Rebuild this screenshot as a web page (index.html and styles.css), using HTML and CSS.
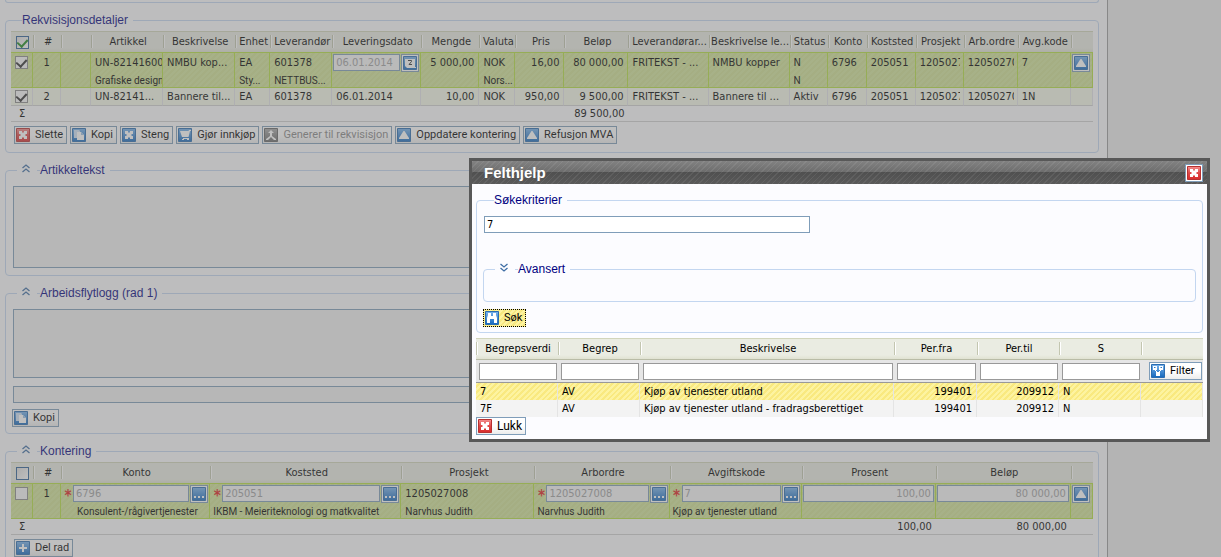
FILE: index.html
```
<!DOCTYPE html>
<html lang="no">
<head>
<meta charset="utf-8">
<title>Rekvisisjon</title>
<link rel="stylesheet" href="styles.css">
</head>
<body>
<svg class="defs" aria-hidden="true">
  <defs>
    <linearGradient id="gBlue" x1="0" y1="0" x2="0" y2="1"><stop offset="0" stop-color="#7ab4ec"/><stop offset="1" stop-color="#1467bd"/></linearGradient>
    <linearGradient id="gRed" x1="0" y1="0" x2="0" y2="1"><stop offset="0" stop-color="#f49090"/><stop offset=".5" stop-color="#e04848"/><stop offset="1" stop-color="#d82c2c"/></linearGradient>
    <linearGradient id="gGrey" x1="0" y1="0" x2="0" y2="1"><stop offset="0" stop-color="#aaa"/><stop offset="1" stop-color="#6a6a6a"/></linearGradient>
    <symbol id="blue" viewBox="0 0 14 14"><path fill="url(#gBlue)" stroke="#2a6cb0" d="M.5.5h13v13H.5z"/></symbol>
    <symbol id="delete" viewBox="0 0 14 14"><path fill="url(#gRed)" stroke="#b83030" d="M.5.5h13v13H.5z"/><path fill="#fff" d="M3 3h3v1l1 1 1-1V3h3v3h-1L9 7l1 1h1v3H8v-1L7 9l-1 1v1H3V8h1l1-1-1-1H3z"/></symbol>
    <symbol id="copy" viewBox="0 0 14 14"><use href="#blue"/><path fill="#cfe2f6" d="M2 2h5l1 1v7H2z"/><path fill="#fff" d="M5 4h4l3 3v5H5z"/><path fill="#9dc1e6" d="M9 4l3 3H9z"/></symbol>
    <symbol id="close" viewBox="0 0 14 14"><use href="#blue"/><path fill="#fff" d="M3 3h3v1l1 1 1-1V3h3v3h-1L9 7l1 1h1v3H8v-1L7 9l-1 1v1H3V8h1l1-1-1-1H3z"/></symbol>
    <symbol id="cart" viewBox="0 0 14 14"><use href="#blue"/><path fill="#fff" d="M2 3h8.500l.5-1h2v1h-1l-1.500 6H4zM5 10h6v1H5z"/><path fill="#fff" d="M4 11h2v1H4zM9 11h2v1H9z"/></symbol>
    <symbol id="gen" viewBox="0 0 14 14"><path fill="url(#gGrey)" stroke="#666" d="M.5.5h13v13H.5z"/><path fill="#fff" d="M7 2l3 3H8v3l4 3v1h-2L7 9l-3 3H2v-1l4-3V5H4z"/></symbol>
    <symbol id="up" viewBox="0 0 14 14"><use href="#blue"/><path fill="#fff" d="M6.500 3h1L12 10v1H2v-1z"/></symbol>
    <symbol id="dots" viewBox="0 0 14 14"><use href="#blue"/><path fill="#fff" d="M2 9h2v2H2zM6 9h2v2H6zM10 9h2v2h-2z"/></symbol>
    <symbol id="cal" viewBox="0 0 14 14"><use href="#blue"/><path fill="#fff" d="M2 3h10v8h1v1H4l-2-2z"/><path fill="none" stroke="#333" d="M5 4.500h3.500v1L6 8.500h3"/></symbol>
    <symbol id="plus" viewBox="0 0 14 14"><use href="#blue"/><path fill="#fff" d="M6 3h2v3h3v2H8v3H6V8H3V6h3z"/></symbol>
    <symbol id="find" viewBox="0 0 14 14"><use href="#blue"/><path fill="#fff" d="M3 2h3v3h2V2h3v2l1 3v5H9V8H5v4H2V7l1-3z"/></symbol>
    <symbol id="filter" viewBox="0 0 14 14"><use href="#blue"/><path fill="#fff" d="M2 2h4v4H2zM8 2h4v4H8zM5 8h4v4H5z"/><path fill="none" stroke="#fff" d="M4 6l2.500 2.500M10 6L7.500 8.500"/><path stroke="#2a78c8" d="M3 3.500h1.500M9.500 3.500H11"/></symbol>
    <symbol id="chev" viewBox="0 0 8 9"><path fill="none" stroke="#3f6ea5" stroke-width="1.300" d="M.5 4L4 1l3.500 3M.5 8L4 5l3.500 3"/></symbol>
  </defs>
</svg>

<div class="page">
  <main class="content">
    <div class="group-end"></div>

    <fieldset class="group grid-group">
      <legend class="plain">Rekvisisjonsdetaljer</legend>
      <table class="grid">
        <colgroup>
          <col style="width:22px"><col style="width:28px"><col style="width:30px"><col style="width:72px"><col style="width:72px"><col style="width:35px"><col style="width:62px"><col style="width:89px"><col style="width:58px"><col style="width:36px"><col style="width:49px"><col style="width:64px"><col style="width:80px"><col style="width:81px"><col style="width:38px"><col style="width:39px"><col style="width:49px"><col style="width:48px"><col style="width:54px"><col style="width:53px"><col style="width:22px">
        </colgroup>
        <thead>
          <tr><th class="ck"><input type="checkbox" class="head" checked aria-label="Velg alle"></th><th>#</th><th></th><th>Artikkel</th><th>Beskrivelse</th><th>Enhet</th><th>Leverandør</th><th>Leveringsdato</th><th>Mengde</th><th>Valuta</th><th>Pris</th><th>Beløp</th><th>Leverandørar...</th><th>Beskrivelse le...</th><th>Status</th><th>Konto</th><th>Koststed</th><th>Prosjekt</th><th>Arb.ordre</th><th>Avg.kode</th><th></th></tr>
        </thead>
        <tbody>
          <tr class="sel">
            <td class="ck"><input type="checkbox" checked aria-label="Velg rad 1"></td><td class="c">1</td><td></td>
            <td><div>UN-82141600</div><div class="sub">Grafiske designt</div></td>
            <td>NMBU kop...</td>
            <td><div>EA</div><div class="sub">Sty...</div></td>
            <td><div>601378</div><div class="sub">NETTBUS...</div></td>
            <td class="ctl"><div class="field"><input class="text" value="06.01.2014" disabled aria-label="Leveringsdato"><button class="ib" aria-label="Kalender"><svg><use href="#cal"/></svg></button></div></td>
            <td class="r">5 000,00</td>
            <td><div>NOK</div><div class="sub">Nors...</div></td>
            <td class="r">16,00</td><td class="r">80 000,00</td><td>FRITEKST - ...</td><td>NMBU kopper</td>
            <td><div>N</div><div class="sub">N</div></td>
            <td>6796</td><td>205051</td><td class="cut"><div>1205027</div></td><td class="cut"><div>12050270</div></td><td>7</td>
            <td class="ctl"><button class="ib" aria-label="Skjul rad"><svg><use href="#up"/></svg></button></td>
          </tr>
          <tr class="alt">
            <td class="ck"><input type="checkbox" checked aria-label="Velg rad 2"></td><td class="c">2</td><td></td><td>UN-82141...</td><td>Bannere til...</td><td>EA</td><td>601378</td><td>06.01.2014</td><td class="r">10,00</td><td>NOK</td><td class="r">950,00</td><td class="r">9 500,00</td><td>FRITEKST - ...</td><td>Bannere til ...</td><td>Aktiv</td><td>6796</td><td>205051</td><td class="cut"><div>1205027</div></td><td class="cut"><div>12050270</div></td><td>1N</td><td></td>
          </tr>
          <tr class="sum"><td class="c">Σ</td><td colspan="10"></td><td class="r">89 500,00</td><td colspan="9"></td></tr>
        </tbody>
      </table>
      <div class="buttons">
        <button class="btn"><svg><use href="#delete"/></svg>Slette</button>
        <button class="btn"><svg><use href="#copy"/></svg>Kopi</button>
        <button class="btn"><svg><use href="#close"/></svg>Steng</button>
        <button class="btn"><svg><use href="#cart"/></svg>Gjør innkjøp</button>
        <button class="btn" disabled><svg><use href="#gen"/></svg>Generer til rekvisisjon</button>
        <button class="btn"><svg><use href="#up"/></svg>Oppdatere kontering</button>
        <button class="btn"><svg><use href="#up"/></svg>Refusjon MVA</button>
      </div>
    </fieldset>

    <fieldset class="group">
      <legend><svg class="chev"><use href="#chev"/></svg><span class="dash"></span>Artikkeltekst</legend>
      <textarea class="box tall" aria-label="Artikkeltekst" readonly></textarea>
    </fieldset>

    <fieldset class="group">
      <legend><svg class="chev"><use href="#chev"/></svg><span class="dash"></span>Arbeidsflytlogg (rad 1)</legend>
      <textarea class="box" aria-label="Arbeidsflytlogg" readonly></textarea>
      <input class="box line" aria-label="Kommentar" readonly>
      <button class="btn copy"><svg><use href="#copy"/></svg>Kopi</button>
    </fieldset>

    <fieldset class="group grid-group">
      <legend><svg class="chev"><use href="#chev"/></svg><span class="dash"></span>Kontering</legend>
      <table class="grid">
        <colgroup>
          <col style="width:22px"><col style="width:28px"><col style="width:149px"><col style="width:191px"><col style="width:133px"><col style="width:135px"><col style="width:132px"><col style="width:134px"><col style="width:135px"><col style="width:22px">
        </colgroup>
        <thead>
          <tr><th class="ck"><input type="checkbox" class="head" aria-label="Velg alle"></th><th>#</th><th>Konto</th><th>Koststed</th><th>Prosjekt</th><th>Arbordre</th><th>Avgiftskode</th><th>Prosent</th><th>Beløp</th><th></th></tr>
        </thead>
        <tbody>
          <tr class="sel">
            <td class="ck"><input type="checkbox" aria-label="Velg rad 1"></td><td class="c">1</td>
            <td class="ctl"><div class="field"><b>*</b><input class="text" value="6796" disabled aria-label="Konto"><button class="ib" aria-label="Søk konto"><svg><use href="#dots"/></svg></button></div><div class="sub indent">Konsulent-/rågivertjenester</div></td>
            <td class="ctl"><div class="field"><b>*</b><input class="text" value="205051" disabled aria-label="Koststed"><button class="ib" aria-label="Søk koststed"><svg><use href="#dots"/></svg></button></div><div class="sub">IKBM - Meieriteknologi og matkvalitet</div></td>
            <td><div>1205027008</div><div class="sub">Narvhus Judith</div></td>
            <td class="ctl"><div class="field"><b>*</b><input class="text" value="1205027008" disabled aria-label="Arbordre"><button class="ib" aria-label="Søk arbordre"><svg><use href="#dots"/></svg></button></div><div class="sub">Narvhus Judith</div></td>
            <td class="ctl"><div class="field"><b>*</b><input class="text" value="7" disabled aria-label="Avgiftskode"><button class="ib" aria-label="Søk avgiftskode"><svg><use href="#dots"/></svg></button></div><div class="sub">Kjøp av tjenester utland</div></td>
            <td class="ctl"><div class="field"><input class="text num" value="100,00" disabled aria-label="Prosent"></div></td>
            <td class="ctl"><div class="field"><input class="text num" value="80 000,00" disabled aria-label="Beløp"></div></td>
            <td class="ctl"><button class="ib" aria-label="Skjul rad"><svg><use href="#up"/></svg></button></td>
          </tr>
          <tr class="sum"><td class="c">Σ</td><td colspan="6"></td><td class="r">100,00</td><td class="r">80 000,00</td><td></td></tr>
        </tbody>
      </table>
      <div class="buttons"><button class="btn"><svg><use href="#plus"/></svg>Del rad</button></div>
    </fieldset>
  </main>
  <aside class="side"></aside>
</div>

<div class="overlay"></div>

<section class="dialog" role="dialog" aria-labelledby="dlg-title">
  <header class="title"><h1 id="dlg-title">Felthjelp</h1><button class="ib" aria-label="Lukk vindu"><svg><use href="#delete"/></svg></button></header>
  <div class="dialog-body">
    <fieldset class="criteria">
      <legend class="plain">Søkekriterier</legend>
      <input class="query" value="7" aria-label="Søkekriterier">
      <fieldset class="advanced">
        <legend><svg class="chev down"><use href="#chev"/></svg><span class="dash"></span>Avansert</legend>
      </fieldset>
      <button class="btn find"><svg><use href="#find"/></svg>Søk</button>
    </fieldset>
    <table class="grid result">
      <colgroup>
        <col style="width:82px"><col style="width:82px"><col style="width:254px"><col style="width:83px"><col style="width:82px"><col style="width:82px"><col style="width:62px">
      </colgroup>
      <thead>
        <tr><th>Begrepsverdi</th><th>Begrep</th><th>Beskrivelse</th><th>Per.fra</th><th>Per.til</th><th>S</th><th></th></tr>
        <tr class="filters"><td><input aria-label="Begrepsverdi"></td><td><input aria-label="Begrep"></td><td><input aria-label="Beskrivelse"></td><td><input aria-label="Per.fra"></td><td><input aria-label="Per.til"></td><td><input aria-label="S"></td><td><button class="btn"><svg><use href="#filter"/></svg>Filter</button></td></tr>
      </thead>
      <tbody>
        <tr class="hit"><td>7</td><td>AV</td><td>Kjøp av tjenester utland</td><td class="r">199401</td><td class="r">209912</td><td>N</td><td></td></tr>
        <tr><td>7F</td><td>AV</td><td>Kjøp av tjenester utland - fradragsberettiget</td><td class="r">199401</td><td class="r">209912</td><td>N</td><td></td></tr>
      </tbody>
    </table>
    <button class="btn shut"><svg><use href="#delete"/></svg>Lukk</button>
  </div>
</section>
</body>
</html>
```
FILE: styles.css
```
* { box-sizing: border-box; }

body {
  margin: 0;
  height: 100vh;
  overflow: hidden;
  position: relative;
  font: 11px/14px "DejaVu Sans Condensed", "Noto Sans", sans-serif;
  color: #000;
}

.defs { position: absolute; width: 0; height: 0; }

.page { display: flex; min-height: 100vh; }
.content {
  flex: 1;
  min-width: 0;
  padding: 0 8px 0 5px;
  background: #fcfcfd;
  border-right: 1px solid #9b9b9b;
}
.side { flex: 0 0 113px; background: #ececec; }

.overlay { position: absolute; inset: 0; background: rgba(114, 114, 114, .45); }

/* Groups */
fieldset { margin: 0; min-width: 0; border: 1px solid #c3d6f0; border-radius: 4px; }
legend {
  display: flex;
  align-items: center;
  height: 13px;
  padding: 0 5px;
  font: 12px/13px "Liberation Sans", Arial, sans-serif;
  color: #000080;
}
legend.plain { padding-left: 0; }
.group { margin-top: 11px; padding: 9px 7px 6px; }
.group legend { margin-left: 4px; }
.grid-group { padding: 4px 5px 9px; }
.grid-group legend { margin-left: 6px; }
.grid-group legend.plain { margin-left: 11px; }
.group-end { height: 3px; border: 1px solid #c3d6f0; border-top: 0; border-radius: 0 0 4px 4px; }
.chev { width: 8px; height: 9px; margin: 0 7px 4px 0; }
.chev.down { transform: rotate(180deg); }
.dash { width: 3px; height: 1px; background: #c3d6f0; }

/* Grids */
.grid { width: 100%; table-layout: fixed; border-spacing: 0; }
.grid th, .grid td { padding: 0 0 0 4px; overflow: hidden; white-space: nowrap; text-align: left; }
.grid td div { overflow: hidden; }
.grid td.cut { padding-right: 3px; }
.grid th {
  height: 21px;
  padding: 0 0 0 2px;
  text-align: center;
  font-weight: normal;
  border-top: 1px solid #d2d5bb;
  background:
    linear-gradient(90deg, #c3c6b0 1px, #fff 1px) 0 3px / 2px 13px no-repeat,
    linear-gradient(#eaece2 80%, #e0e2d2);
}
.grid th.ck { background: linear-gradient(#eaece2 80%, #e0e2d2); }
.grid td.c { padding: 0 1px; text-align: center; }
.grid td.r { padding-right: 4px; text-align: right; }
.grid .ck { padding: 0; text-align: center; }
.grid .sel td {
  height: 35px;
  padding-top: 3px;
  vertical-align: top;
  border: 1px solid #b5df40;
  border-width: 1px 1px 1px 0;
  background: repeating-linear-gradient(135deg, #d3e59c 0 2px, #cfe192 2px 4px);
}
.grid .sel td.ctl { padding: 1px 1px 0 1px; }
.grid .alt td { height: 18px; background: #f4f8e8; border-right: 1px solid #e2e2e8; border-bottom: 1px solid #cfcfcf; }
.grid .sum td { height: 16px; border-bottom: 1px solid #cfcfcf; }
.sub { font-family: Roboto, sans-serif; font-size: 10px; line-height: 13px; padding-top: 4px; }
.ctl .sub { padding: 1px 0 0 2px; }
.ctl .sub.indent { padding-left: 15px; }

/* Controls */
input, button, textarea { font: inherit; color: inherit; margin: 0; }
input[type="checkbox"] {
  appearance: none;
  display: inline-block;
  width: 13px;
  height: 13px;
  border: 1px solid #8c8c8c;
  background: #f7f7f7;
  vertical-align: middle;
}
.sel input[type="checkbox"] { vertical-align: top; }
input[type="checkbox"].head { border-color: #2d6096; background: linear-gradient(135deg, #dcdcdc, #fff); }
input[type="checkbox"]:checked::before {
  content: "";
  display: block;
  width: 5px;
  height: 8px;
  margin: 0 auto;
  border: solid #303030;
  border-width: 0 2px 2px 0;
  transform: rotate(42deg);
}
input.head[type="checkbox"]:checked::before { border-color: #1d8a1d; }

.field { display: flex; gap: 1px; }
.field b { flex: 0 0 8px; padding-top: 3px; font-size: 15px; line-height: 16px; text-align: center; color: #e02020; }
.ctl .field b { margin-left: 2px; }
.text {
  flex: 1;
  min-width: 0;
  height: 17px;
  padding: 0 2px;
  border: 1px solid #7f9db9;
  background: #f6f6f6;
  color: #a0a0a0;
}
.num { text-align: right; }
.ib {
  flex: none;
  display: block;
  width: 18px;
  height: 18px;
  padding: 1px;
  border: 1px solid #7f9db9;
  background: #fff;
}
.btn {
  display: flex;
  align-items: center;
  gap: 5px;
  height: 18px;
  padding: 0 3px 0 1px;
  border: 1px solid #7f9db9;
  background: linear-gradient(#fff 50%, #ececec);
  font-family: Roboto, sans-serif;
  white-space: nowrap;
}
.btn:disabled { color: #888; }
.btn svg, .ib svg { display: block; flex: none; width: 14px; height: 14px; }
.buttons { display: flex; gap: 3px; margin: 4px 0 0 3px; }
.grid-group { padding-bottom: 8px; }
.copy { margin-left: -1px; }

.box {
  display: block;
  width: 100%;
  height: 69px;
  border: 1px solid #7f9db9;
  background: #f0f0f0;
  resize: none;
}
.tall { height: 82px; margin-bottom: 1px; }
.line { height: 17px; margin: 8px 0 6px; }

/* Dialog */
.dialog {
  position: absolute;
  left: 469px;
  top: 158px;
  right: 11px;
  border: 3px solid #585858;
  background: #fcfcff;
}
.title {
  display: flex;
  align-items: center;
  justify-content: space-between;
  height: 23px;
  padding: 0 4px 0 12px;
  background:
    repeating-linear-gradient(135deg, rgba(255,255,255,.07) 0 1px, transparent 1px 4px),
    linear-gradient(#828282, #6c6c6c 50%, #505050 50%, #5a5a5a);
  color: #fff;
}
.title h1 { margin: 0; font: bold 15px/20px "Liberation Sans", Arial, sans-serif; }
.dialog-body { padding: 10px 4px 4px; }
.criteria { padding: 9px 6px 5px 7px; margin-bottom: 5px; }
.criteria .plain { margin-left: 10px; }
.query { display: block; width: 326px; height: 17px; padding: 0 2px; border: 1px solid #7f9db9; background: #fff; }
.advanced { margin: 30px 0 7px -1px; height: 39px; padding: 0; }
.criteria .advanced legend { margin-left: 11px; }
.find { margin-left: -1px; border: 1px dotted #000; background: repeating-linear-gradient(135deg, #fdf3a0 0 2px, #f8e880 2px 4px); }

.result thead th { height: 22px; border-bottom: 1px solid #b9bca6; }
.result .filters td { height: 23px; padding: 0 1px 0 3px; background: #e6e6e6; border-bottom: 1px solid #999; }
.filters input { display: block; width: 100%; height: 17px; border: 1px solid #999; background: #fff; }
.filters .btn { margin-left: 5px; width: 53px; }
.result tbody td { height: 17px; background: #f3f3f3; border-right: 1px solid #e4e4e4; }
.result tbody .hit td { background: repeating-linear-gradient(135deg, #fdf3a0 0 2px, #f9e980 2px 4px); }
.shut { font-size: 12px; }
```
